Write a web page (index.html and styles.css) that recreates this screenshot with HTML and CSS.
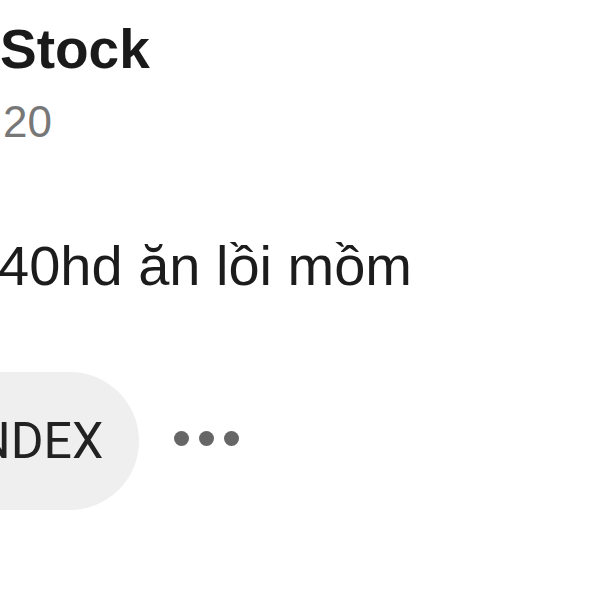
FILE: index.html
```html
<!DOCTYPE html>
<html lang="vi">
<head>
  <meta charset="UTF-8" />
  <meta name="viewport" content="width=device-width, initial-scale=1.0"/>
  <title>Stock post</title>
  <link rel="stylesheet" href="styles.css">
</head>
<body>
  <div class="post">
    <h1 class="post-title">Stock</h1>
    <div class="post-date">20</div>
    <p class="post-body">40hd ăn lồi mồm</p>

    <div class="post-actions">
      <span class="tag-pill">NDEX</span>
      <button class="more-btn" aria-label="More">
        <span class="dot"></span>
        <span class="dot"></span>
        <span class="dot"></span>
      </button>
    </div>
  </div>
</body>
</html>
```

FILE: styles.css
```css
body {
  margin: 0;
  background-color: #ffffff;
  font-family: 'Liberation Sans', Arial, sans-serif;
  color: #1c1c1c;
  overflow: hidden;
}

.post {
  padding-top: 17px;
}

.post-title {
  margin: 0;
  font-size: 55px;
  line-height: 64px;
  font-weight: bold;
  color: #1a1a1a;
}

.post-date {
  margin-top: 15px;
  margin-left: 3px;
  font-size: 44px;
  line-height: 52px;
  color: #777777;
}

.post-body {
  margin: 85px 0 0 -2px;
  font-size: 56px;
  line-height: 66px;
  color: #1c1c1c;
}

/* tag + more row */
.post-actions {
  display: flex;
  align-items: center;
  gap: 35px;
  margin-top: 73px;
}

.tag-pill {
  display: flex;
  align-items: center;
  height: 138px;
  margin-left: -100px;
  padding: 0 36px 0 75px;
  border-radius: 69px;
  background-color: #efefef;
  font-family: Roboto, 'Liberation Sans', sans-serif;
  font-size: 50px;
  color: #222;
}

.more-btn {
  display: flex;
  gap: 10px;
  margin-bottom: 6px;
  padding: 0;
  border: none;
  background: none;
  cursor: pointer;
}

.dot {
  width: 15px;
  height: 15px;
  border-radius: 50%;
  background-color: #666666;
}
```
